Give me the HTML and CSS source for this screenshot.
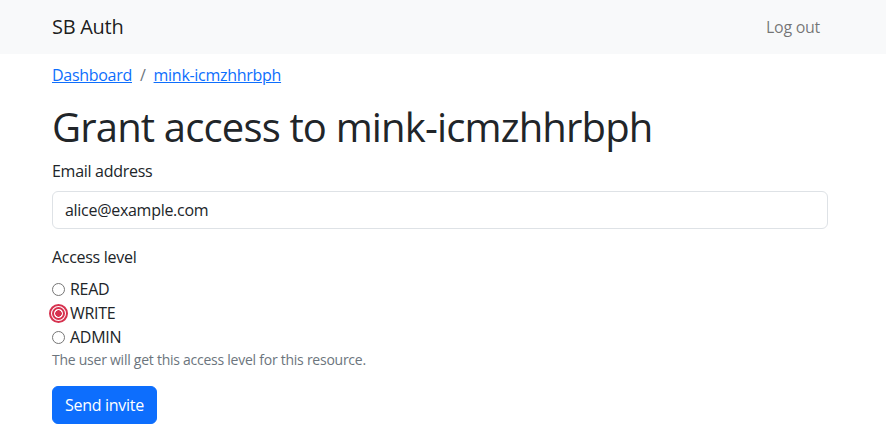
FILE: index.html
```html
<!DOCTYPE html>
<html lang="en">
<head>
<meta charset="utf-8">
<title>SB Auth</title>
<link rel="stylesheet" href="styles.css">
</head>
<body>
<nav class="navbar">
  <div class="navbar-inner">
    <a class="brand" href="#">SB Auth</a>
    <a class="nav-link" href="#">Log out</a>
  </div>
</nav>
<main class="container">
  <ol class="breadcrumb">
    <li><a href="#">Dashboard</a></li>
    <li class="sep">/</li>
    <li><a href="#">mink-icmzhhrbph</a></li>
  </ol>
  <h1 class="title">Grant access to mink-icmzhhrbph</h1>
  <form class="form">
    <div class="field">
      <label class="form-label" for="email">Email address</label>
      <input class="form-control" id="email" type="email" value="alice@example.com">
    </div>
    <div class="field">
      <div class="form-label">Access level</div>
      <div class="radios">
        <label class="radio"><input type="radio" name="level" value="READ"><span>READ</span></label>
        <label class="radio"><input type="radio" name="level" value="WRITE" checked><span>WRITE</span></label>
        <label class="radio"><input type="radio" name="level" value="ADMIN"><span>ADMIN</span></label>
      </div>
      <div class="form-text">The user will get this access level for this resource.</div>
    </div>
    <button class="btn" type="button">Send invite</button>
  </form>
</main>
</body>
</html>
```
FILE: styles.css
```css
* { box-sizing: border-box; }
html, body { margin: 0; padding: 0; }
body {
  font-family: "Open Sans", "Noto Sans", sans-serif;
  font-size: 16px;
  line-height: 1.5;
  letter-spacing: -0.018em;
  color: #212529;
  background: #fff;
}
.navbar {
  background: #f8f9fa;
  height: 54px;
}
.navbar-inner {
  width: 776px;
  margin-left: 52px;
  height: 100%;
  display: flex;
  align-items: center;
  justify-content: space-between;
}
.brand {
  font-size: 20px;
  line-height: 30px;
  color: rgba(0,0,0,.9);
  text-decoration: none;
}
.nav-link {
  color: rgba(0,0,0,.55);
  text-decoration: none;
  padding: 8px;
}
.container {
  width: 776px;
  margin-left: 52px;
  padding-top: 9px;
}
.breadcrumb {
  list-style: none;
  margin: 0 0 16px;
  padding: 0;
  display: flex;
}
.breadcrumb a { color: #0d6efd; text-decoration: underline; }
.breadcrumb .sep { color: #6c757d; padding: 0 8px; }
.title {
  font-size: 40px;
  font-weight: 500;
  line-height: 1.2;
  letter-spacing: -0.021em;
  margin: 0 0 8px;
}
.field { margin-bottom: 16px; }
.form-label { display: block; margin-bottom: 8px; }
.form-control {
  display: block;
  width: 100%;
  height: 38px;
  padding: 6px 12px;
  font: inherit;
  letter-spacing: inherit;
  color: #212529;
  border: 1px solid #dee2e6;
  border-radius: 6px;
  background: #fff;
}
.radios { display: flex; flex-direction: column; }
.radio { display: flex; align-items: center; height: 24px; }
.radio input {
  appearance: none;
  -webkit-appearance: none;
  width: 13px;
  height: 13px;
  margin: 0 5px 0 0;
  border: 1px solid #767676;
  border-radius: 50%;
  background: #fff;
}
.radio input:checked {
  border: 2px solid #d6324f;
  background: radial-gradient(circle, #d6324f 0 3px, #fff 3.5px);
  outline: 2px solid #d6324f;
  outline-offset: 1px;
}
.form-text { font-size: 14px; color: #6c757d; line-height: 21px; letter-spacing: -0.018em; }
.btn {
  font: inherit;
  letter-spacing: inherit;
  color: #fff;
  background: #0d6efd;
  border: 1px solid #0d6efd;
  border-radius: 6px;
  padding: 6px 12px;
  height: 38px;
}
```
